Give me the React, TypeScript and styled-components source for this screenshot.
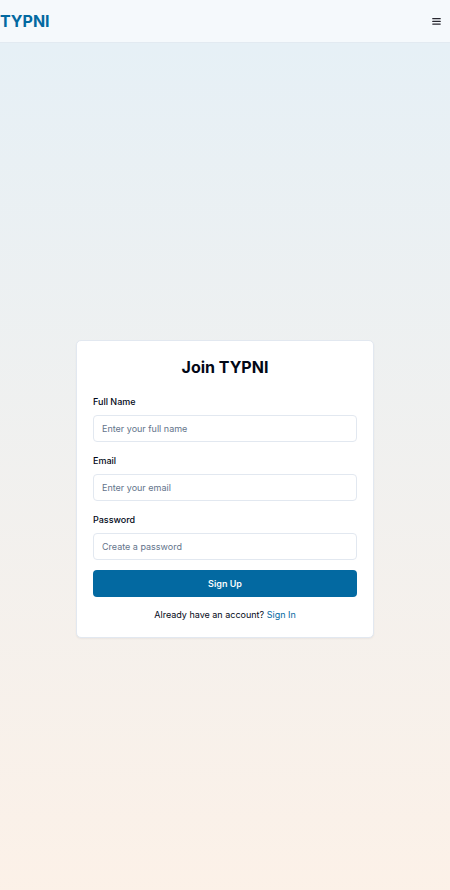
import React from "react";
import styled, { createGlobalStyle } from "styled-components";

const GlobalStyle = createGlobalStyle`
  *, *::before, *::after { box-sizing: border-box; }
  body {
    margin: 0;
    font-family: Inter, "Liberation Sans", sans-serif;
    color: #020817;
    -webkit-font-smoothing: antialiased;
  }
`;

const Page = styled.div`
  display: flex;
  flex-direction: column;
  min-height: 100vh;
  background: linear-gradient(to bottom, #e6f0f6 5%, #fdf1e7 105%);
`;

const Header = styled.header`
  display: flex;
  align-items: center;
  justify-content: space-between;
  height: 43px;
  padding-right: 7px;
  background: #f5f9fc;
  border-bottom: 1px solid #e2eaf1;
`;

const Brand = styled.a`
  font-size: 16px;
  line-height: 24px;
  font-weight: 700;
  color: #0369a1;
  text-decoration: none;
`;

const MenuButton = styled.button`
  display: flex;
  padding: 2px;
  border: 0;
  background: transparent;
  color: #27272f;
  cursor: pointer;
`;

const Main = styled.main`
  flex: 1;
  display: flex;
  align-items: center;
  justify-content: center;
  padding: 45px 16px 0;
`;

const Card = styled.section`
  width: 100%;
  max-width: 298px;
  padding: 16px;
  background: #ffffff;
  border: 1px solid #e2e8f0;
  border-radius: 5px;
  box-shadow: 0 1px 2px rgba(15, 23, 42, 0.05);
`;

const Title = styled.h1`
  margin: 0 0 16px;
  font-size: 16px;
  line-height: 20px;
  font-weight: 700;
  text-align: center;
`;

const Form = styled.form`
  display: flex;
  flex-direction: column;
  gap: 10px;
`;

const Field = styled.div`
  display: flex;
  flex-direction: column;
  gap: 4px;
`;

const Label = styled.label`
  font-size: 9px;
  line-height: 18px;
  font-weight: 500;
`;

const Input = styled.input`
  width: 100%;
  height: 27px;
  padding: 0 8px;
  border: 1px solid #e2e8f0;
  border-radius: 4px;
  background: #ffffff;
  font: inherit;
  font-size: 9px;
  color: inherit;

  &::placeholder { color: #64748b; opacity: 1; }
`;

const SubmitButton = styled.button`
  height: 27px;
  border: 0;
  border-radius: 4px;
  background: #0369a1;
  color: #f8fafc;
  font: inherit;
  font-size: 9px;
  font-weight: 600;
  cursor: pointer;
`;

const Footnote = styled.p`
  margin: 11px 0 0;
  font-size: 9px;
  line-height: 13px;
  text-align: center;
`;

const TextLink = styled.a`
  color: #0369a1;
  text-decoration: none;
`;

const fields = [
  { id: "name", label: "Full Name", type: "text", placeholder: "Enter your full name" },
  { id: "email", label: "Email", type: "email", placeholder: "Enter your email" },
  { id: "password", label: "Password", type: "password", placeholder: "Create a password" },
];

export default function App() {
  return (
    <>
      <GlobalStyle />
      <Page>
        <Header>
          <Brand href="#home">TYPNI</Brand>
          <MenuButton type="button" aria-label="Open menu">
            <svg width="9" height="9" viewBox="0 0 9 9" aria-hidden="true">
              <path
                d="M.8 1.7h7.4M.8 4.4h7.4M.8 7.1h7.4"
                stroke="currentColor"
                strokeWidth="1.3"
                strokeLinecap="round"
              />
            </svg>
          </MenuButton>
        </Header>
        <Main>
          <Card>
            <Title>Join TYPNI</Title>
            <Form onSubmit={(event: React.FormEvent) => event.preventDefault()}>
              {fields.map((field) => (
                <Field key={field.id}>
                  <Label htmlFor={field.id}>{field.label}</Label>
                  <Input id={field.id} type={field.type} placeholder={field.placeholder} />
                </Field>
              ))}
              <SubmitButton type="submit">Sign Up</SubmitButton>
            </Form>
            <Footnote>
              Already have an account? <TextLink href="#sign-in">Sign In</TextLink>
            </Footnote>
          </Card>
        </Main>
      </Page>
    </>
  );
}
